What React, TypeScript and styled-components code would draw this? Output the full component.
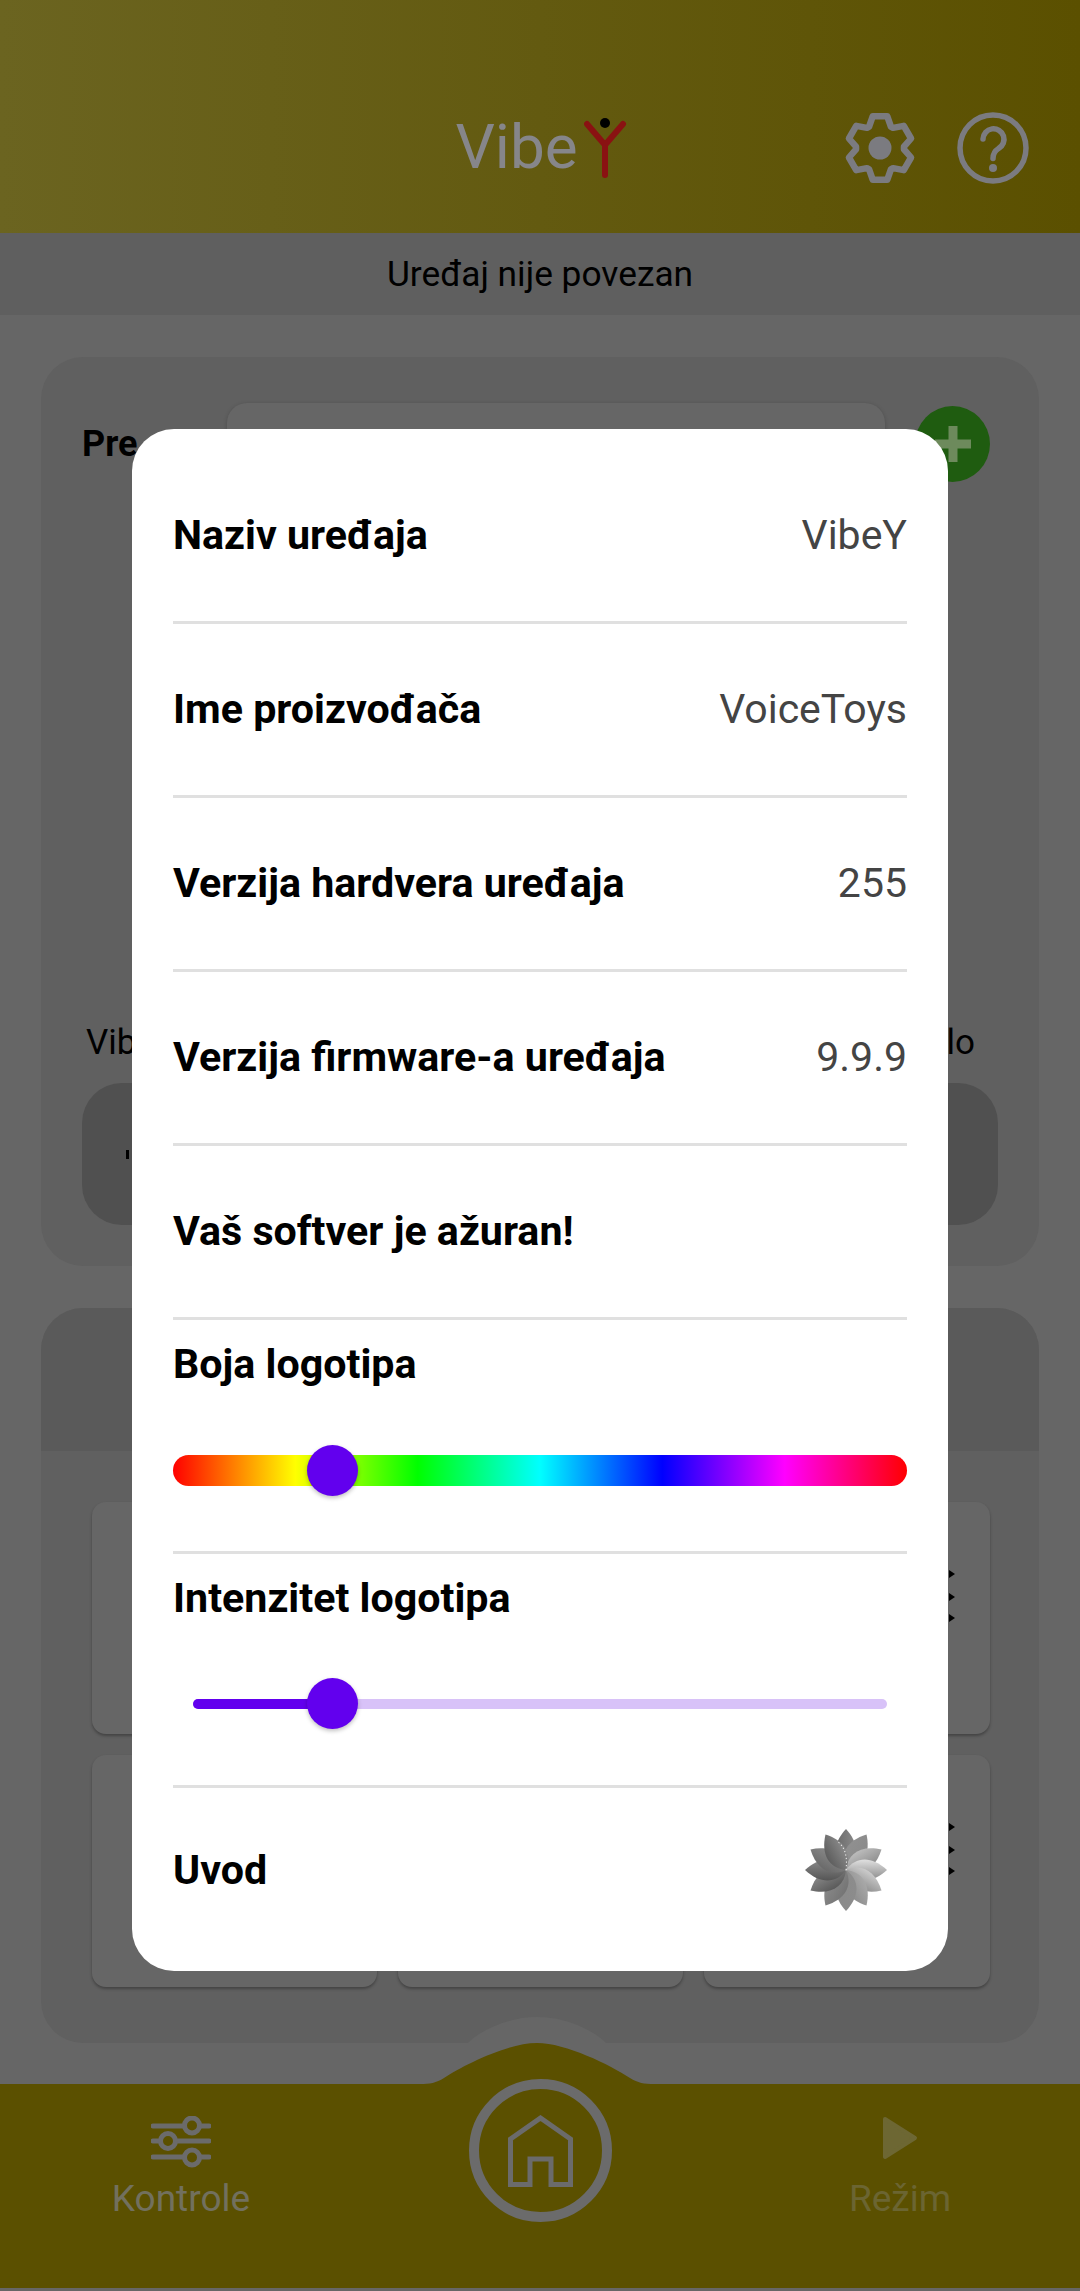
import React from "react";
import styled, { createGlobalStyle } from "styled-components";

const Global = createGlobalStyle`
  html, body { margin: 0; padding: 0; background: #666; }
  * { box-sizing: border-box; }
  body { font-family: Roboto, "Liberation Sans", sans-serif; }
`;

const Page = styled.div`
  position: relative;
  width: 1080px;
  height: 2291px;
  overflow: hidden;
  display: flex;
  flex-direction: column;
  background: #666;
`;

const Header = styled.header`
  height: 233px;
  display: grid;
  grid-template-columns: 1fr auto 1fr;
  align-items: start;
  padding-top: 112px;
  background: linear-gradient(90deg, #6b6420 0%, #5b5000 100%);
`;

const Logo = styled.div`
  display: flex;
  align-items: flex-start;
  gap: 6px;
  margin-left: 3px;
`;

const LogoText = styled.span`
  font-size: 62px;
  line-height: 70px;
  color: #86868a;
`;

const LogoMarkBox = styled.div`
  margin-top: 6px;
`;

const HeaderIcons = styled.div`
  display: flex;
  justify-content: flex-end;
  gap: 41px;
  padding-right: 51px;
`;

const StatusBar = styled.div`
  height: 82px;
  display: flex;
  align-items: center;
  justify-content: center;
  background: #5f5f5f;
  font-size: 35.3px;
  color: #000;
`;

const Main = styled.main`
  flex: 1;
  display: flex;
  flex-direction: column;
  gap: 42px;
  padding: 42px 41px 0;
`;

const Panel = styled.section<{ $height: number }>`
  height: ${(p) => p.$height}px;
  border-radius: 42px;
  background: #606060;
  overflow: hidden;
`;

const PresetRow = styled.div`
  display: flex;
  align-items: flex-start;
  padding: 46px 0 0 41px;
`;

const PresetLabel = styled.span`
  width: 145px;
  margin-top: 21px;
  font-size: 36px;
  font-weight: 700;
  line-height: 40px;
  color: #000;
`;

const PresetInput = styled.div`
  width: 658px;
  height: 90px;
  border-radius: 20px;
  background: #666;
  box-shadow: 0 1px 4px rgba(0, 0, 0, 0.2);
`;

const AddButton = styled.div`
  width: 75px;
  height: 76px;
  margin: 3px 0 0 30px;
  border-radius: 50%;
  background: #1f5c10;
  display: flex;
  align-items: center;
  justify-content: center;
`;

const LabelRow = styled.div`
  display: flex;
  justify-content: space-between;
  padding: 530px 64px 0 45px;
  font-size: 35px;
  line-height: 40px;
  color: #000;
`;

const Meter = styled.div`
  height: 142px;
  margin: 20px 41px 0;
  border-radius: 40px;
  background: #505050;
  display: flex;
  align-items: center;
`;

const MeterTick = styled.i`
  width: 3px;
  height: 9px;
  margin-left: 44px;
  background: #000;
`;

const PanelHead = styled.div`
  height: 143px;
  background: #5a5a5a;
`;

const CellGrid = styled.div`
  display: grid;
  grid-template-columns: 285px 285px 286px;
  column-gap: 21px;
  row-gap: 21px;
  padding: 51px 0 0 51px;
`;

const Cell = styled.div`
  position: relative;
  height: 232px;
  border-radius: 14px;
  background: #666;
  box-shadow: 0 2px 3px rgba(0, 0, 0, 0.3);
`;

const Marks = styled.div`
  position: absolute;
  left: 245px;
  top: 68px;
`;

const Nav = styled.nav`
  position: relative;
  height: 204px;
  margin-bottom: 3px;
  display: grid;
  grid-template-columns: 362px 356px 362px;
  background: #5b5000;
`;

const Bump = styled.svg`
  position: absolute;
  left: 420px;
  top: -67px;
`;

const NavItem = styled.div<{ $color: string; $shift: number }>`
  display: flex;
  flex-direction: column;
  align-items: center;
  padding-top: 32px;
  padding-left: ${(p) => p.$shift}px;
  font-size: 37px;
  line-height: 42px;
  color: ${(p) => p.$color};
`;

const NavIcon = styled.div`
  height: 60px;
  margin-bottom: 2px;
`;

const HomeSlot = styled.div`
  position: relative;
  display: flex;
  justify-content: center;
  margin-top: -5px;
`;

const HomeRing = styled.div`
  width: 143px;
  height: 143px;
  border: 10px solid #6b6b6b;
  border-radius: 50%;
  display: flex;
  align-items: center;
  justify-content: center;
`;

const Modal = styled.div`
  position: absolute;
  left: 132px;
  top: 429px;
  width: 816px;
  height: 1542px;
  padding: 21px 41px 0;
  border-radius: 42px;
  background: #fff;
  display: flex;
  flex-direction: column;
`;

const Row = styled.div`
  height: 174px;
  padding-bottom: 2px;
  display: flex;
  align-items: center;
  justify-content: space-between;
  border-bottom: 3px solid #e0e0e0;
`;

const LastRow = styled(Row)`
  height: 166px;
  border-bottom: none;
  padding: 0 19px 2px 0;
`;

const Title = styled.span`
  font-size: 41.2px;
  font-weight: 700;
  line-height: 48px;
  color: #000;
`;

const Value = styled.span`
  font-size: 41px;
  line-height: 48px;
  color: #444;
`;

const SliderSection = styled.div`
  height: 234px;
  padding-top: 20px;
  border-bottom: 3px solid #e0e0e0;
`;

const SliderBox = styled.div<{ $gap: number }>`
  position: relative;
  height: 51px;
  margin-top: ${(p) => p.$gap}px;
  display: flex;
  align-items: center;
`;

const HueTrack = styled.div`
  width: 100%;
  height: 31px;
  border-radius: 16px;
  background: linear-gradient(90deg, #f00 0%, #ff0 16.67%, #0f0 33.33%, #0ff 50%, #00f 66.67%, #f0f 83.33%, #f00 100%);
`;

const LineTrack = styled.div`
  width: 694px;
  height: 10px;
  margin-left: 20px;
  border-radius: 5px;
  background: #d8c2f8;
  overflow: hidden;
`;

const LineFill = styled.div`
  height: 100%;
  background: #6200ee;
`;

const Thumb = styled.div`
  position: absolute;
  left: 134px;
  top: 0;
  width: 51px;
  height: 51px;
  border-radius: 50%;
  background: #6200ee;
  box-shadow: 0 2px 4px rgba(0, 0, 0, 0.25);
`;

const Gear = () => {
  const c = 36;
  const pts: string[] = [];
  for (let i = 0; i < 6; i++) {
    const a = -90 + i * 60;
    const p = (r: number, d: number) => {
      const t = ((a + d) * Math.PI) / 180;
      return `${(c + r * Math.cos(t)).toFixed(2)},${(c + r * Math.sin(t)).toFixed(2)}`;
    };
    pts.push(p(24, -27), p(32.5, -13), p(32.5, 13), p(24, 27));
  }
  return (
    <svg width="72" height="72" viewBox="0 0 72 72">
      <polygon points={pts.join(" ")} fill="none" stroke="#7b7b80" strokeWidth="6.5" strokeLinejoin="round" />
      <circle cx="36" cy="36" r="11.5" fill="#7b7b80" />
    </svg>
  );
};

const Help = () => (
  <svg width="72" height="72" viewBox="0 0 72 72">
    <circle cx="36" cy="36" r="33" fill="none" stroke="#7b7b80" strokeWidth="5.5" />
    <path d="M26 27a10.5 10.5 0 1 1 15.5 9.5c-3.5 2.2-5.5 4.5-5.5 10" fill="none" stroke="#7b7b80" strokeWidth="5.5" strokeLinecap="round" />
    <circle cx="36" cy="56" r="4" fill="#7b7b80" />
  </svg>
);

const LogoMark = () => (
  <svg width="44" height="60" viewBox="0 0 44 60">
    <path d="M3 6 L21 27 L39 6 M21 27 V57" fill="none" stroke="#8a1212" strokeWidth="6" strokeLinecap="round" strokeLinejoin="round" />
    <circle cx="21" cy="5" r="5" fill="#000" />
  </svg>
);

const SlidersIcon = () => (
  <svg width="60" height="52" viewBox="0 0 60 52">
    <g stroke="#6b6b6b" strokeWidth="5" fill="#5b5000" strokeLinecap="round">
      <path d="M2 10H58M2 25H58M2 41H58" fill="none" />
      <circle cx="41" cy="9.5" r="7.5" />
      <circle cx="17" cy="25" r="7.5" />
      <circle cx="41" cy="41.5" r="7.5" />
    </g>
  </svg>
);

const HomeIcon = () => (
  <svg width="65" height="72" viewBox="0 0 65 72">
    <path d="M2.5 69.5V24L32.5 3L62.5 24V69.5H43V44H22V69.5Z" fill="none" stroke="#6b6b6b" strokeWidth="5" />
  </svg>
);

const PlayIcon = () => (
  <svg width="36" height="44" viewBox="0 0 36 44">
    <path d="M3 3L33 22L3 41Z" fill="#6d6733" stroke="#6d6733" strokeWidth="4" strokeLinejoin="round" />
  </svg>
);

const petalColors = ["#6a6a6a", "#909090", "#bcbcbc", "#e0e0e0", "#cccccc", "#a8a8a8", "#8c8c8c", "#757575", "#5a5a5a", "#555555", "#6a6a6a", "#5d5d5d"];

const Flower = () => (
  <svg width="84" height="84" viewBox="-42 -42 84 84">
    <defs>
      {petalColors.map((c, i) => (
        <linearGradient key={c + i} id={`petal${i}`} x1="0" y1="0" x2="1" y2="0">
          <stop offset="0" stopColor={c} />
          <stop offset="1" stopColor="#8a8a8a" />
        </linearGradient>
      ))}
    </defs>
    {petalColors.map((_, i) => (
      <g key={i} transform={`rotate(${i * 30})`}>
        <path d="M0 0C-14 -10 -14 -26 0 -41C12 -28 15 -12 0 0Z" fill={`url(#petal${i})`} />
        <path d="M0 0C7 -10 11 -18 7 -29" fill="none" stroke="#fff" strokeWidth="0.9" strokeDasharray="1.2 2.4" />
      </g>
    ))}
  </svg>
);

const BlackMarks = () => (
  <svg width="10" height="54" viewBox="0 0 10 54">
    <path d="M0 0L6 4L0 8ZM0 23L6 27L0 31ZM0 44L6 48L0 52Z" fill="#000" />
  </svg>
);

const infoRows = [
  ["Naziv uređaja", "VibeY"],
  ["Ime proizvođača", "VoiceToys"],
  ["Verzija hardvera uređaja", "255"],
  ["Verzija firmware-a uređaja", "9.9.9"],
  ["Vaš softver je ažuran!", ""],
];

export default function App() {
  return (
    <Page>
      <Global />
      <Header>
        <span />
        <Logo>
          <LogoText>Vibe</LogoText>
          <LogoMarkBox>
            <LogoMark />
          </LogoMarkBox>
        </Logo>
        <HeaderIcons>
          <Gear />
          <Help />
        </HeaderIcons>
      </Header>
      <StatusBar>Uređaj nije povezan</StatusBar>
      <Main>
        <Panel $height={909}>
          <PresetRow>
            <PresetLabel>Pre</PresetLabel>
            <PresetInput />
            <AddButton>
              <svg width="40" height="40" viewBox="0 0 40 40">
                <path d="M20 2V38M2 20H38" stroke="#6d8a5c" strokeWidth="9" />
              </svg>
            </AddButton>
          </PresetRow>
          <LabelRow>
            <span>Vib</span>
            <span>lo</span>
          </LabelRow>
          <Meter>
            <MeterTick />
          </Meter>
        </Panel>
        <Panel $height={735}>
          <PanelHead />
          <CellGrid>
            {[0, 1, 2, 3, 4, 5].map((i) => (
              <Cell key={i}>
                {i % 3 === 2 && (
                  <Marks>
                    <BlackMarks />
                  </Marks>
                )}
              </Cell>
            ))}
          </CellGrid>
        </Panel>
      </Main>
      <Nav>
        <Bump width="234" height="67" viewBox="0 0 234 67">
          <path d="M48 26C62 12 90 0 117 0C144 0 172 12 186 26L186 50L48 50Z" fill="#666" />
          <path d="M0 67C10 67 16 66 24 61C44 48 88 26 117 26C146 26 190 48 210 61C218 66 224 67 234 67Z" fill="#5b5000" />
        </Bump>
        <NavItem $color="#72705e" $shift={0}>
          <NavIcon>
            <SlidersIcon />
          </NavIcon>
          Kontrole
        </NavItem>
        <HomeSlot>
          <HomeRing>
            <HomeIcon />
          </HomeRing>
        </HomeSlot>
        <NavItem $color="#6b6532" $shift={2}>
          <NavIcon>
            <PlayIcon />
          </NavIcon>
          Režim
        </NavItem>
      </Nav>
      <Modal>
        {infoRows.map(([t, v]) => (
          <Row key={t}>
            <Title>{t}</Title>
            {v && <Value>{v}</Value>}
          </Row>
        ))}
        <SliderSection>
          <Title>Boja logotipa</Title>
          <SliderBox $gap={57}>
            <HueTrack />
            <Thumb />
          </SliderBox>
        </SliderSection>
        <SliderSection>
          <Title>Intenzitet logotipa</Title>
          <SliderBox $gap={56}>
            <LineTrack>
              <LineFill style={{ width: `${(139 / 694) * 100}%` }} />
            </LineTrack>
            <Thumb />
          </SliderBox>
        </SliderSection>
        <LastRow>
          <Title>Uvod</Title>
          <Flower />
        </LastRow>
      </Modal>
    </Page>
  );
}
